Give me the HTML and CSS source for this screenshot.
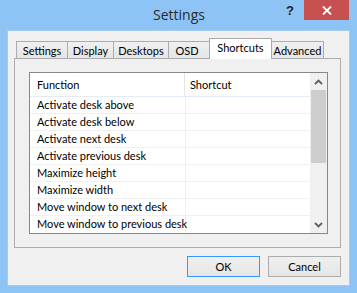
FILE: index.html
```html
<!DOCTYPE html>
<html lang="en">
<head>
  <meta charset="UTF-8">
  <title>Settings</title>
  <link rel="stylesheet" href="styles.css">
</head>
<body>
  <div class="window">
    <div class="titleBar">
      <div></div>
      <div class="title">Settings</div>
      <div class="titleButtons">
        <span class="helpButton">?</span>
        <span class="closeButton">
          <svg width="10" height="9" viewBox="0 0 10 9">
            <path d="M1 0.5 L9 8.5 M9 0.5 L1 8.5" stroke="#ffffff" stroke-width="1.8" fill="none"/>
          </svg>
        </span>
      </div>
    </div>

    <div class="client">
      <div class="tabs">
        <span class="tab tabSettings">Settings</span>
        <span class="tab tabDisplay">Display</span>
        <span class="tab tabDesktops">Desktops</span>
        <span class="tab tabOsd">OSD</span>
        <span class="tab tabShortcuts active">Shortcuts</span>
        <span class="tab tabAdvanced">Advanced</span>
      </div>

      <div class="panel">
        <div class="listView">
          <div class="listBody">
            <div class="listHeader">
              <span class="colFunction">Function</span>
              <span class="colShortcut">Shortcut</span>
            </div>
            <div id="rows"></div>
          </div>
          <div class="scrollBar">
            <span class="scrollArrow">
              <svg width="9" height="6" viewBox="0 0 9 6">
                <path d="M1 5 L4.5 1.5 L8 5" stroke="#606060" stroke-width="1.8" fill="none"/>
              </svg>
            </span>
            <span class="scrollThumb"></span>
            <span class="scrollTrack"></span>
            <span class="scrollArrow">
              <svg width="9" height="6" viewBox="0 0 9 6">
                <path d="M1 1 L4.5 4.5 L8 1" stroke="#606060" stroke-width="1.8" fill="none"/>
              </svg>
            </span>
          </div>
        </div>
      </div>

      <div class="buttons">
        <button class="button default">OK</button>
        <button class="button">Cancel</button>
      </div>
    </div>
  </div>

  <script>
    // shortcut list
    const shortcuts = [
      'Activate desk above',
      'Activate desk below',
      'Activate next desk',
      'Activate previous desk',
      'Maximize height',
      'Maximize width',
      'Move window to next desk',
      'Move window to previous desk'
    ];

    document.getElementById('rows').innerHTML = shortcuts.map(name => `
      <div class="listRow">
        <span class="colFunction">${name}</span>
        <span class="colShortcut"></span>
      </div>
    `).join('');
  </script>
</body>
</html>
```

FILE: styles.css
```css
html, body {
  margin: 0;
  padding: 0;
  font-family: 'Lato', 'Liberation Sans', sans-serif;
  font-size: 11px;
  color: #000000;
}

.window {
  width: 357px;
  height: 293px;
  box-sizing: border-box;
  background-color: #8ec4f5;
  padding: 0 7px 7px;
  display: flex;
  flex-direction: column;
}

.titleBar {
  height: 30px;
  display: grid;
  grid-template-columns: 1fr auto 1fr;
  margin: 0 -7px;
}

.title {
  font-family: 'Open Sans', sans-serif;
  font-size: 14px;
  color: #2b2b2b;
  line-height: 30px;
  padding-left: 1px;
}

.titleButtons {
  display: flex;
  justify-content: flex-end;
  align-items: flex-start;
  padding-right: 8px;
}

.helpButton {
  width: 26px;
  height: 20px;
  line-height: 22px;
  text-align: center;
  font-family: 'Liberation Sans', sans-serif;
  font-weight: 700;
  font-size: 13px;
  color: #1e1e1e;
  padding-right: 1px;
}

.closeButton {
  width: 45px;
  height: 20px;
  background-color: #c75050;
  display: flex;
  justify-content: center;
  align-items: center;
}

.client {
  flex: 1;
  border: 1px solid #a5cbee;
  background-color: #f0f0f0;
  display: flex;
  flex-direction: column;
  padding: 7px 8px 8px 6px;
}

.tabs {
  display: flex;
  align-items: flex-end;
  height: 20px;
  padding-left: 2px;
  position: relative;
  z-index: 1;
}

.tab {
  box-sizing: border-box;
  height: 17px;
  line-height: 17px;
  text-align: center;
  border: 1px solid #acacac;
  border-bottom: none;
  margin-right: -1px;
  background: linear-gradient(#f0f0f0, #e5e5e5);
  color: #000000;
  white-space: nowrap;
}

.tabSettings { width: 52px; }
.tabDisplay { width: 47px; }
.tabDesktops { width: 56px; }
.tabOsd { width: 44px; padding-right: 6px; }
.tabShortcuts { width: 63px; }
.tabAdvanced { width: 53px; }

.tab.active {
  height: 21px;
  line-height: 17px;
  padding-bottom: 2px;
  background: #ffffff;
  margin: 0 -1px -1px -2px;
  position: relative;
  z-index: 2;
}

.panel {
  flex: 1;
  border: 1px solid #acacac;
  background-color: #f0f0f0;
  padding: 13px 12px 13px 14px;
  display: flex;
}

.listView {
  flex: 1;
  display: flex;
  border: 1px solid #828790;
  background-color: #ffffff;
}

.listBody {
  flex: 1;
}

.listHeader {
  display: flex;
  height: 23px;
  line-height: 23px;
  border-bottom: 1px solid #e3ebf6;
}

.listHeader .colFunction {
  width: 147px;
  border-right: 1px solid #e5e5e5;
}

.listRow {
  display: flex;
  height: 16px;
  line-height: 16px;
  border-bottom: 1px solid #f0f0f0;
}

.listRow:last-child {
  border-bottom: none;
  height: 17px;
}

.colFunction {
  width: 148px;
  padding-left: 7px;
  border-right: 1px solid #f0f0f0;
  white-space: nowrap;
}

.colShortcut {
  flex: 1;
  padding-left: 5px;
}

.scrollBar {
  width: 17px;
  display: flex;
  flex-direction: column;
  background-color: #f0f0f0;
}

.scrollArrow {
  height: 17px;
  display: flex;
  justify-content: center;
  align-items: center;
}

.scrollThumb {
  height: 73px;
  margin: 0 1px;
  background-color: #cdcdcd;
}

.scrollTrack {
  flex: 1;
}

.buttons {
  display: flex;
  justify-content: flex-end;
  gap: 8px;
  padding-top: 8px;
}

.button {
  width: 73px;
  height: 21px;
  padding: 0;
  font-family: inherit;
  font-size: 11px;
  border: 1px solid #acacac;
  background: linear-gradient(#f0f0f0, #e5e5e5);
  color: #000000;
}

.button.default {
  border-color: #3399ff;
}
```
